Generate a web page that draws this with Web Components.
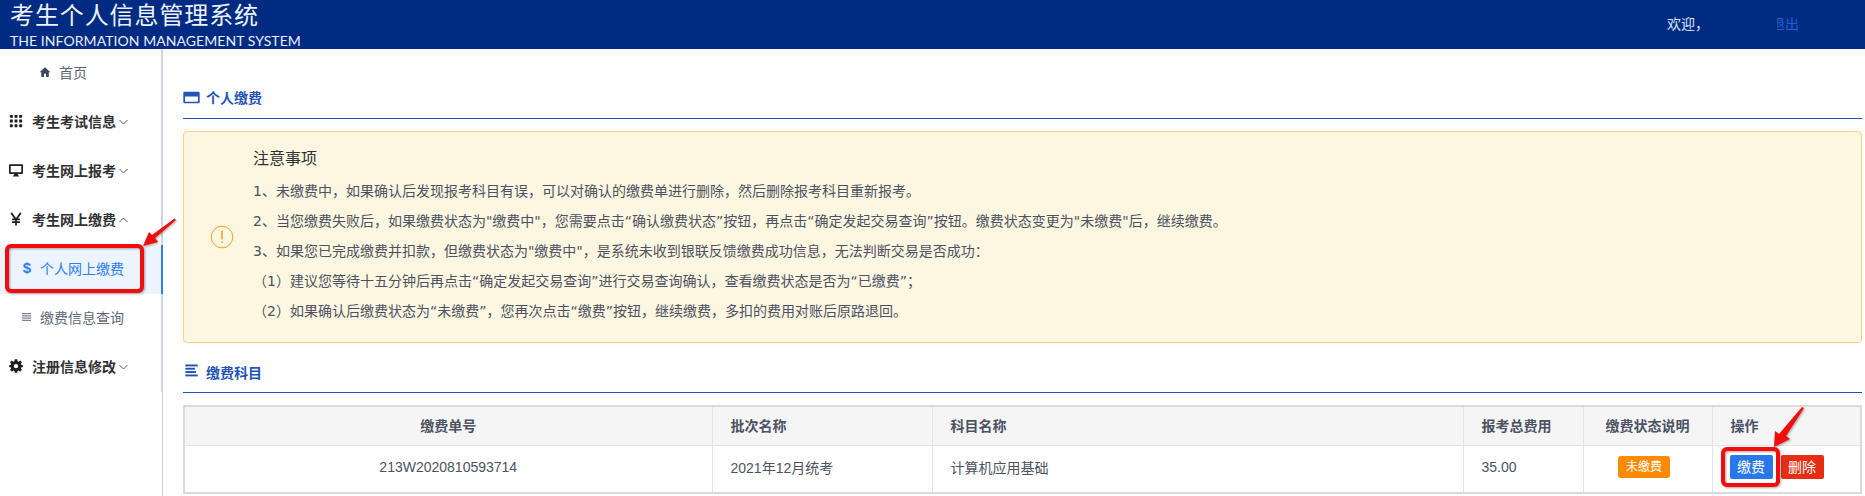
<!DOCTYPE html>
<html lang="zh-CN">
<head>
<meta charset="utf-8">
<title>考生个人信息管理系统</title>
<style>
    html, body { margin: 0; height: 100%; overflow: hidden; background: #fff; }
    body {
        position: relative;
        font-family: "Liberation Sans", "Noto Sans CJK SC", sans-serif;
        color: #4c5262;
        text-spacing-trim: space-all;
        text-autospace: no-autospace;
    }
    .layout { display: grid; grid-template-columns: 163px 1fr; height: calc(100% - 49px); }
</style>
</head>
<body>
<app-header title-text="考生个人信息管理系统" sub-text="THE INFORMATION MANAGEMENT SYSTEM"></app-header>
<div class="layout">
    <side-nav>
        <nav-item kind="home" icon="home">首页</nav-item>
        <nav-item kind="group" icon="grid" arrow="down">考生考试信息</nav-item>
        <nav-item kind="group" icon="monitor" arrow="down">考生网上报考</nav-item>
        <nav-item kind="group" icon="yen" arrow="up">考生网上缴费</nav-item>
        <nav-item kind="sub" icon="dollar" active>个人网上缴费</nav-item>
        <nav-item kind="sub" icon="lines">缴费信息查询</nav-item>
        <nav-item kind="group" icon="gear" arrow="down">注册信息修改</nav-item>
    </side-nav>
    <main-panel>
        <section-title icon="card">个人缴费</section-title>
        <notice-box heading="注意事项">
            <p>1、未缴费中，如果确认后发现报考科目有误，可以对确认的缴费单进行删除，然后删除报考科目重新报考。</p>
            <p>2、当您缴费失败后，如果缴费状态为"缴费中"，您需要点击“确认缴费状态”按钮，再点击“确定发起交易查询”按钮。缴费状态变更为"未缴费"后，继续缴费。</p>
            <p>3、如果您已完成缴费并扣款，但缴费状态为"缴费中"，是系统未收到银联反馈缴费成功信息，无法判断交易是否成功：</p>
            <p>（1）建议您等待十五分钟后再点击“确定发起交易查询”进行交易查询确认，查看缴费状态是否为“已缴费”；</p>
            <p>（2）如果确认后缴费状态为“未缴费”，您再次点击“缴费”按钮，继续缴费，多扣的费用对账后原路退回。</p>
        </notice-box>
        <section-title icon="list">缴费科目</section-title>
        <pay-table></pay-table>
    </main-panel>
</div>
<red-marks></red-marks>

<script>
const ICONS = {
    home: '<path fill="currentColor" d="M8 1.500 .8 8.300H3V14.500H6.600V10.200H9.400V14.500H13V8.300H15.200Z"/>',
    grid: '<g fill="currentColor"><rect x="1" y="1" width="3.400" height="3.400" rx=".6"/><rect x="6.300" y="1" width="3.400" height="3.400" rx=".6"/><rect x="11.600" y="1" width="3.400" height="3.400" rx=".6"/><rect x="1" y="6.300" width="3.400" height="3.400" rx=".6"/><rect x="6.300" y="6.300" width="3.400" height="3.400" rx=".6"/><rect x="11.600" y="6.300" width="3.400" height="3.400" rx=".6"/><rect x="1" y="11.600" width="3.400" height="3.400" rx=".6"/><rect x="6.300" y="11.600" width="3.400" height="3.400" rx=".6"/><rect x="11.600" y="11.600" width="3.400" height="3.400" rx=".6"/></g>',
    monitor: '<path fill="currentColor" fill-rule="evenodd" d="M1 1.500H15A1 1 0 0 1 16 2.500V11.500A1 1 0 0 1 15 12.500H10L10.500 14.300H11.500V15.300H4.500V14.300H5.500L6 12.500H1A1 1 0 0 1 0 11.500V2.500A1 1 0 0 1 1 1.500ZM1.900 3.300V10.700H14.100V3.300Z"/>',
    yen: '<path fill="none" stroke="currentColor" stroke-width="2" d="M2.500 1 8 8.500 13.500 1M8 8V15.500M3.500 8.500H12.500M3.500 11.500H12.500"/>',
    lines: '<path fill="none" stroke="currentColor" stroke-width="1.500" d="M1.300 3.500H13.300M1.300 6.500H13.300M1.300 9.500H13.300M1.300 12.500H13.300"/>',
    gear: '<path fill="currentColor" fill-rule="evenodd" d="M6.600 .3H9.400L9.800 2.400 11.100 3 12.900 1.800 14.800 3.700 13.600 5.500 14.200 6.800 15.900 7.200V9L14.200 9.400 13.600 10.700 14.800 12.500 12.900 14.400 11.100 13.200 9.800 13.800 9.400 15.700H6.600L6.200 13.800 4.900 13.200 3.100 14.400 1.200 12.500 2.400 10.700 1.800 9.400.1 9V7.200L1.800 6.800 2.400 5.500 1.200 3.700 3.100 1.800 4.900 3 6.200 2.400ZM8 5.600A2.500 2.500 0 1 0 8 10.600 2.500 2.500 0 1 0 8 5.600Z"/>',
    card: '<path fill="currentColor" fill-rule="evenodd" d="M1.500 2.500H14.500A1.200 1.200 0 0 1 15.700 3.700V12.300A1.200 1.200 0 0 1 14.500 13.500H1.500A1.200 1.200 0 0 1 .3 12.300V3.700A1.200 1.200 0 0 1 1.500 2.500ZM1.900 7V11.900H14.100V7Z"/>',
    list: '<g fill="currentColor"><rect x="2.200" y="1.400" width="11.700" height="1.800"/><rect x="2.200" y="4.500" width="9" height="1.800"/><rect x="2.200" y="7.600" width="10" height="1.800"/><rect x="2.200" y="10.800" width="11.700" height="1.800"/></g>'
};

function iconSvg(name, size) {
    if (name === 'dollar') {
        return '<span class="glyph">$</span>';
    }
    return `<svg width="${size}" height="${size}" viewBox="0 0 16 16" aria-hidden="true">${ICONS[name] || ''}</svg>`;
}

class AppHeader extends HTMLElement {
    constructor() {
        super();
        this.attachShadow({mode: 'open'});
    }

    connectedCallback() {
        this.shadowRoot.innerHTML = `
            <style>
                :host {
                    display: flex; height: 49px; background: #002b83; color: #fff;
                    justify-content: space-between; overflow: hidden;
                }
                .brand { padding: 1px 0 0 10px; }
                h1 { margin: 0; font-size: 24px; font-weight: 400; line-height: 30px; letter-spacing: .9px; color: #eef1f8; }
                small { display: block; font: 14px/18px Lato, "Open Sans", sans-serif; letter-spacing: .06px; margin-top: 1px; color: #e8edf6; }
                .user { display: flex; font-size: 14px; align-items: center; width: 198px; height: 46px; color: #dfe6f3; }
                .mask { width: 68px; height: 30px; margin-right: -6px; background: #002b83; position: relative; z-index: 1; }
                a { color: #1f5fce; text-decoration: none; }
            </style>
            <div class="brand">
                <h1>${this.getAttribute('title-text')}</h1>
                <small>${this.getAttribute('sub-text')}</small>
            </div>
            <div class="user"><span>欢迎，</span><span class="mask"></span><a href="#">退出</a></div>
        `;
    }
}

class SideNav extends HTMLElement {
    constructor() {
        super();
        this.attachShadow({mode: 'open'});
        this.shadowRoot.innerHTML = `
            <style>
                :host { display: block; position: relative; border-right: 1px solid #ccd2dc; box-sizing: border-box; }
                :host::after { content: ''; position: absolute; top: 0; right: -1px; width: 2px; height: 343px; background: #ced6e4; }
            </style>
            <slot></slot>
        `;
    }
}

class NavItem extends HTMLElement {
    constructor() {
        super();
        this.attachShadow({mode: 'open'});
    }

    connectedCallback() {
        const kind = this.getAttribute('kind');
        const arrow = this.getAttribute('arrow');
        const path = arrow === 'up' ? 'M1.500 7 5.500 3 9.500 7' : 'M1.500 3 5.500 7 9.500 3';
        this.shadowRoot.innerHTML = `
            <style>
                :host { display: flex; align-items: center; box-sizing: border-box; height: 49px; padding-bottom: 4px; font-size: 14px; color: #4f5666; position: relative; z-index: 1; }
                :host([kind="home"]) { padding-left: 39px; color: #5f6574; }
                :host([kind="group"]) { padding-left: 9px; font-weight: 700; color: #303133; }
                :host([kind="sub"]) { padding-left: 21px; color: #63687a; }
                :host([active]) { background: #ecf5ff; color: #2e7cf0; margin-right: -1px; border-right: 2px solid #2e7cf0; }
                svg { flex: none; }
                .glyph { flex: none; width: 12px; margin-right: 7px; font-size: 15px; font-weight: 700; line-height: 17px; text-align: center; }
                :host([kind="home"]) svg { margin-right: 8px; color: #3d4658; }
                :host([kind="sub"]) svg { margin-right: 7px; color: #7d8391; }
                :host([kind="group"]) svg { margin-right: 9px; color: #1b1f27; }
                :host([kind="group"]) svg.arrow { margin: 2px 0 0 2px; color: #4f5666; }
            </style>
            ${iconSvg(this.getAttribute('icon'), kind === 'group' ? 14 : 12)}
            <span><slot></slot></span>
            ${arrow ? `<svg class="arrow" width="11" height="10" viewBox="0 0 11 10"><path d="${path}" fill="none" stroke="currentColor" stroke-width="1"/></svg>` : ''}
        `;
    }
}

class MainPanel extends HTMLElement {
    constructor() {
        super();
        this.attachShadow({mode: 'open'});
        this.shadowRoot.innerHTML = `
            <style>
                :host { display: block; padding: 0 3px 0 20px; min-width: 0; }
            </style>
            <slot></slot>
        `;
    }
}

class SectionTitle extends HTMLElement {
    constructor() {
        super();
        this.attachShadow({mode: 'open'});
    }

    connectedCallback() {
        this.shadowRoot.innerHTML = `
            <style>
                :host {
                    display: flex; align-items: center; gap: 6px; height: 50px; box-sizing: border-box;
                    padding-top: 8px; margin-bottom: 12px;
                    border-bottom: 1px solid #1b4fbb; font-size: 14px; font-weight: 700; color: #2353b4;
                }
                :host(:first-child) { height: 70px; padding-top: 27px; }
            </style>
            ${iconSvg(this.getAttribute('icon'), 17)}
            <span><slot></slot></span>
        `;
    }
}

class NoticeBox extends HTMLElement {
    constructor() {
        super();
        this.attachShadow({mode: 'open'});
    }

    connectedCallback() {
        // DejaVu first only for its wider quotes and digit, the rest falls through to the CJK font
        this.shadowRoot.innerHTML = `
            <style>
                :host {
                    display: flex; align-items: center; height: 212px; box-sizing: border-box;
                    background: #fdf6e0; border: 1px solid #fbd27a; border-radius: 4px;
                }
                .mark { flex: none; width: 69px; box-sizing: border-box; padding-left: 26px; color: #fa9f1e; display: flex; }
                .body { flex: 1; padding-bottom: 4px; }
                h4 { margin: 0 0 2px; font-size: 16px; line-height: 30px; font-weight: 400; color: #303133; }
                ::slotted(p) { margin: 0; font: 14px/30px "DejaVu Sans", "Noto Sans CJK SC", sans-serif; color: #4c5262; }
            </style>
            <div class="mark">
                <svg width="24" height="24" viewBox="0 0 24 24"><circle cx="12" cy="12" r="10.800" fill="none" stroke="currentColor" stroke-width="1"/><path d="M12 5.800V14.500M12 16.500V18.200" stroke="currentColor" stroke-width="1.500" fill="none"/></svg>
            </div>
            <div class="body">
                <h4>${this.getAttribute('heading')}</h4>
                <slot></slot>
            </div>
        `;
    }
}

class PayTable extends HTMLElement {
    constructor() {
        super();
        this.attachShadow({mode: 'open'});
        this.shadowRoot.innerHTML = `
            <style>
                :host { display: block; font-size: 14px; }
                table { width: 100%; border-collapse: collapse; table-layout: fixed; border: 2px solid #d9dade; }
                th, td { border: 1px solid #e3e4e8; text-align: center; padding: 0; box-sizing: border-box; }
                th { background: #f5f5f5; height: 39px; padding-bottom: 2px; color: #4c5262; font-weight: 700; }
                td { height: 48px; padding-bottom: 3px; color: #4c5262; }
                .l { text-align: left; padding-left: 18px; }
                .tag { display: inline-block; background: #ff8b04; color: #fff; border-radius: 3px; font-size: 12px; width: 52px; line-height: 22px; margin-right: 7px; }
                .btn { display: inline-block; border-radius: 2px; color: #fff; width: 43px; line-height: 24px; text-align: center; }
                .pay { background: #2878ec; margin: 0 8px 0 -1px; }
                .del { background: #e72e14; }
            </style>
            <table>
                <colgroup><col style="width:528px"><col style="width:220px"><col style="width:531px"><col style="width:120px"><col style="width:129px"><col></colgroup>
                <tr><th>缴费单号</th><th class="l">批次名称</th><th class="l">科目名称</th><th class="l">报考总费用</th><th>缴费状态说明</th><th class="l">操作</th></tr>
                <tr><td>213W2020810593714</td><td class="l">2021年12月统考</td><td class="l">计算机应用基础</td><td class="l">35.00</td><td><span class="tag">未缴费</span></td><td class="l"><span class="btn pay">缴费</span><span class="btn del">删除</span></td></tr>
            </table>
        `;
    }
}

class RedMarks extends HTMLElement {
    constructor() {
        super();
        this.attachShadow({mode: 'open'});
        this.shadowRoot.innerHTML = `
            <style>
                :host { position: absolute; inset: 0; pointer-events: none; z-index: 5; }
                svg { position: absolute; left: 0; top: 0; filter: drop-shadow(1px 1px 1px rgba(0,0,0,.35)); }
            </style>
            <svg width="1865" height="496" viewBox="0 0 1865 496">
                <rect x="7" y="246" width="135" height="45" rx="4" fill="none" stroke="#f10d0c" stroke-width="4"/>
                <path fill="#f10d0c" d="M176 220 155 238 158 242 143 246 149 232 152 235 174.500 218.500Z"/>
                <rect x="1723" y="449" width="55" height="36" rx="4" fill="none" stroke="#f10d0c" stroke-width="4"/>
                <path fill="#f10d0c" d="M1804 408 1786 436 1790 439 1774 447 1775 431 1779 434 1802 407Z"/>
            </svg>
        `;
    }
}

customElements.define('app-header', AppHeader);
customElements.define('side-nav', SideNav);
customElements.define('nav-item', NavItem);
customElements.define('main-panel', MainPanel);
customElements.define('section-title', SectionTitle);
customElements.define('notice-box', NoticeBox);
customElements.define('pay-table', PayTable);
customElements.define('red-marks', RedMarks);
</script>
</body>
</html>
